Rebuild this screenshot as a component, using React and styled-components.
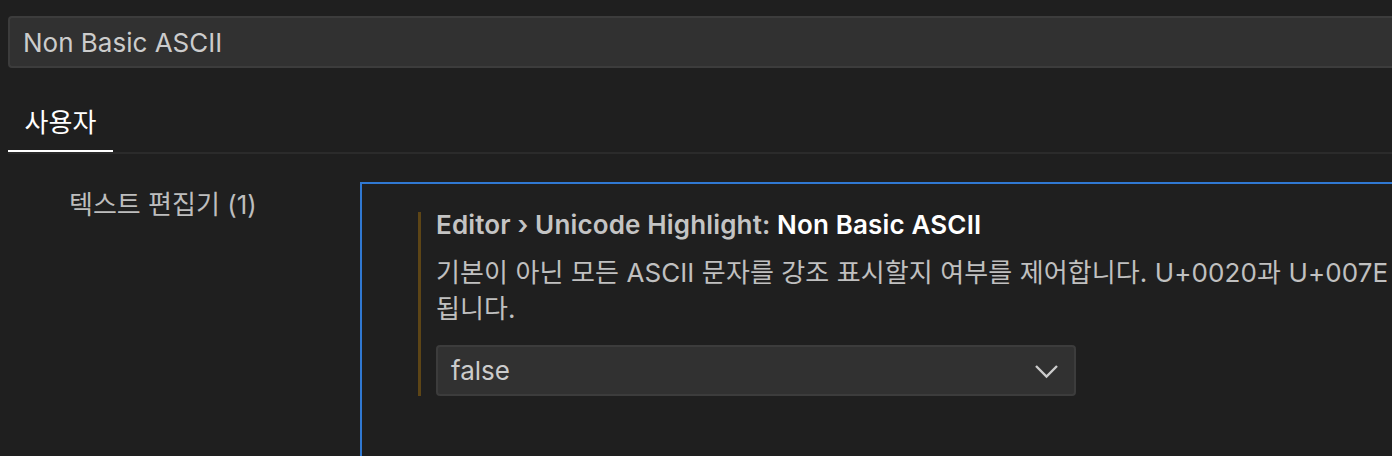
import React from "react";
import styled, { createGlobalStyle } from "styled-components";

const GlobalStyle = createGlobalStyle`
  html, body {
    margin: 0;
    padding: 0;
    background: #1f1f1f;
    overflow: hidden;
  }
  body {
    font-family: Inter, "Noto Sans CJK KR", sans-serif;
    color: #cccccc;
  }
`;

const Page = styled.div`
  width: 1480px;
  height: 456px;
  overflow: hidden;
`;

const Header = styled.header`
  padding: 16px 0 0 8px;
`;

const SearchBox = styled.div`
  box-sizing: border-box;
  height: 52px;
  display: flex;
  align-items: center;
  padding-left: 13px;
  background: #313131;
  border: 2px solid #3c3c3c;
  border-right: none;
  border-radius: 4px 0 0 4px;
  font-size: 26px;
  color: #cccccc;
`;

const Tabs = styled.nav`
  display: flex;
  margin: 22px 0 0 8px;
  border-bottom: 2px solid #2b2b2b;
`;

const Tab = styled.div`
  box-sizing: border-box;
  width: 105px;
  height: 62px;
  display: flex;
  align-items: center;
  justify-content: center;
  font-size: 26px;
  color: ${(p) => (p.$active ? "#ffffff" : "#9d9d9d")};
  border-bottom: 2px solid ${(p) => (p.$active ? "#ffffff" : "transparent")};
`;

const Body = styled.main`
  display: flex;
  margin-top: 28px;
`;

const Toc = styled.aside`
  width: 360px;
  flex-shrink: 0;
  padding-left: 69px;
  box-sizing: border-box;
`;

const TocItem = styled.div`
  line-height: 46px;
  font-size: 26px;
  color: #bdbdbd;
`;

const Panel = styled.section`
  flex: 1;
  height: 420px;
  border: 2px solid #3078d2;
  padding: 23px 0 0 56px;
`;

const Setting = styled.div`
  display: flex;
`;

const ModifiedBar = styled.div`
  width: 3px;
  margin: 5px 15px 0 0;
  background: rgba(187, 128, 9, 0.4);
`;

const Content = styled.div`
  display: flex;
  flex-direction: column;
`;

const Title = styled.div`
  font-size: 26px;
  line-height: 36px;
  font-weight: 600;
  letter-spacing: 0.15px;
  color: #c4c4c4;
  white-space: nowrap;
`;

const Label = styled.span`
  color: #ffffff;
`;

const Description = styled.div`
  margin-top: 12px;
  font-size: 26px;
  line-height: 36px;
  letter-spacing: 0.1px;
  color: #c0c0c0;
  white-space: nowrap;
`;

const Select = styled.div`
  box-sizing: border-box;
  margin-top: 18px;
  width: 640px;
  height: 51px;
  display: flex;
  align-items: center;
  justify-content: space-between;
  padding: 0 16px 0 13px;
  background: #313131;
  border: 2px solid #3c3c3c;
  border-radius: 4px;
  font-size: 26px;
  color: #cccccc;
`;

const Chevron = () => (
  <svg width="24" height="16" viewBox="0 0 24 16" fill="none">
    <path d="M2 3 L12.5 13.5 L23 3" stroke="#cccccc" strokeWidth="2.4" />
  </svg>
);

export default function App() {
  return (
    <Page>
      <GlobalStyle />
      <Header>
        <SearchBox>Non Basic ASCII</SearchBox>
      </Header>
      <Tabs>
        <Tab $active>사용자</Tab>
      </Tabs>
      <Body>
        <Toc>
          <TocItem>텍스트 편집기 (1)</TocItem>
        </Toc>
        <Panel>
          <Setting>
            <ModifiedBar />
            <Content>
              <Title>
                Editor › Unicode Highlight: <Label>Non Basic ASCII</Label>
              </Title>
              <Description>
                기본이 아닌 모든 ASCII 문자를 강조 표시할지 여부를 제어합니다. U+0020과 U+007E
                <br />
                됩니다.
              </Description>
              <Select>
                false
                <Chevron />
              </Select>
            </Content>
          </Setting>
        </Panel>
      </Body>
    </Page>
  );
}
